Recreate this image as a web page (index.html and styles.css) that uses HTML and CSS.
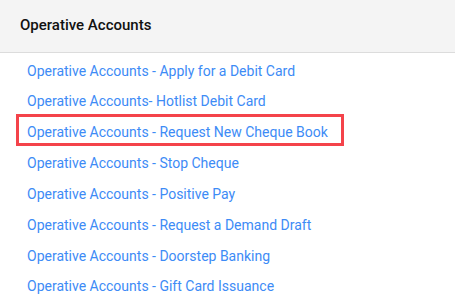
FILE: index.html
```html
<!DOCTYPE html>
<html>
<head>
<meta charset="utf-8">
<link rel="stylesheet" href="styles.css">
</head>
<body>
<div class="panel">
  <div class="panel-header">Operative Accounts</div>
  <ul class="link-list">
    <li><a href="#">Operative Accounts - Apply for a Debit Card</a></li>
    <li><a href="#">Operative Accounts- Hotlist Debit Card</a></li>
    <li class="highlight"><a href="#">Operative Accounts - Request New Cheque Book</a></li>
    <li><a href="#">Operative Accounts - Stop Cheque</a></li>
    <li><a href="#">Operative Accounts - Positive Pay</a></li>
    <li><a href="#">Operative Accounts - Request a Demand Draft</a></li>
    <li><a href="#">Operative Accounts - Doorstep Banking</a></li>
    <li><a href="#">Operative Accounts - Gift Card Issuance</a></li>
  </ul>
</div>
</body>
</html>
```
FILE: styles.css
```css
html, body {
  margin: 0;
  padding: 0;
  background: #ffffff;
}
body {
  font-family: Roboto, "Liberation Sans", sans-serif;
  width: 455px;
  height: 298px;
  overflow: hidden;
}
.panel-header {
  height: 53px;
  box-sizing: border-box;
  background: #f4f4f4;
  border-bottom: 1px solid #dcdcdc;
  padding: 0 0 2px 20px;
  font-size: 15px;
  font-weight: 500;
  color: #111111;
  line-height: 50px;
}
.link-list {
  list-style: none;
  margin: 0;
  padding: 2.5px 0 0 27px;
}
.link-list li {
  line-height: 30.85px;
  height: 30.85px;
  font-size: 14px;
}
.link-list a {
  color: #3d8bf6;
  text-decoration: none;
}
.link-list li.highlight {
  position: relative;
}
.link-list li.highlight::after {
  content: "";
  position: absolute;
  left: -11px;
  top: -3.5px;
  width: 328px;
  height: 32px;
  box-sizing: border-box;
  border: 3px solid #f4434a;
}
```
